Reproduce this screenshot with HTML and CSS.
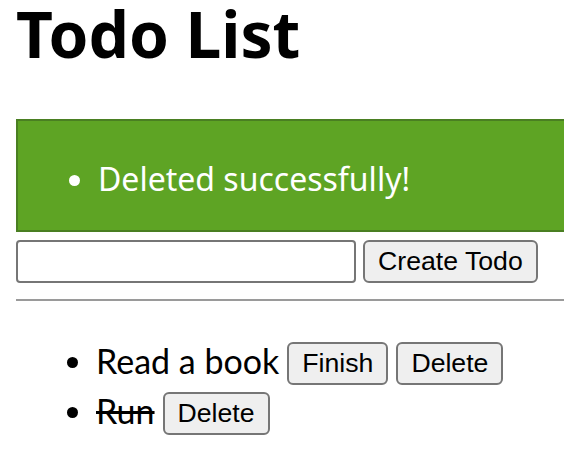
FILE: index.html
```html
<!DOCTYPE html>
<html>
<head>
<meta charset="utf-8">
<link rel="stylesheet" href="styles.css">
</head>
<body>
<div class="app">
  <h1 class="title">Todo List</h1>
  <div class="alert">
    <ul class="alert-list">
      <li>Deleted successfully!</li>
    </ul>
  </div>
  <form class="create-form">
    <input class="todo-input" type="text">
    <button class="btn btn-create" type="button">Create Todo</button>
  </form>
  <hr class="divider">
  <ul class="todos">
    <li class="todo"><span class="todo-text">Read a book</span><button class="btn" type="button">Finish</button><button class="btn" type="button">Delete</button></li>
    <li class="todo"><span class="todo-text done">Run</span><button class="btn" type="button">Delete</button></li>
  </ul>
</div>
</body>
</html>
```

FILE: styles.css
```css
html, body {
  overflow: hidden;
}
body {
  margin: 0;
  background: #fff;
  font-family: "Noto Sans", sans-serif;
  color: #000;
}
.app {
  width: 600px;
  padding: 0 0 0 16px;
}
.title {
  margin: 0;
  font-size: 64px;
  font-weight: 700;
  line-height: 68px;
}
.alert {
  margin-top: 51px;
  background: #5ea424;
  border: 2px solid #4a7f22;
  color: #fff;
  height: 113px;
  box-sizing: border-box;
}
.alert-list {
  margin: 0;
  padding: 36px 0 0 80px;
  font-size: 32px;
  line-height: 44px;
}
.create-form {
  display: flex;
  gap: 7px;
  margin-top: 8px;
}
.todo-input {
  width: 340px;
  height: 43px;
  box-sizing: border-box;
  border: 2px solid #767676;
  border-radius: 4px;
  margin: 0;
}
.btn {
  font-family: "Liberation Sans", Arial, sans-serif;
  font-size: 26.67px;
  background: #efefef;
  border: 2px solid #767676;
  border-radius: 6px;
  height: 43px;
  padding: 0 13px;
  color: #000;
  margin: 0;
}
.divider {
  margin: 16px 0 0 0;
  border: none;
  border-top: 2px solid #9a9a9a;
  height: 0;
}
.todos {
  margin: 37px 0 0 0;
  padding-left: 80px;
  font-size: 34px;
  font-family: Lato, sans-serif;
}
.todo {
  display: flex;
  align-items: center;
  gap: 8px;
  height: 50px;
  list-style: none;
  position: relative;
}
.todo::before {
  content: "";
  position: absolute;
  left: -29px;
  top: 19px;
  width: 11px;
  height: 11px;
  border-radius: 50%;
  background: #000;
}
.todo-text {
  margin-bottom: 6px;
}
.todo-text.done {
  text-decoration: line-through;
}
```
